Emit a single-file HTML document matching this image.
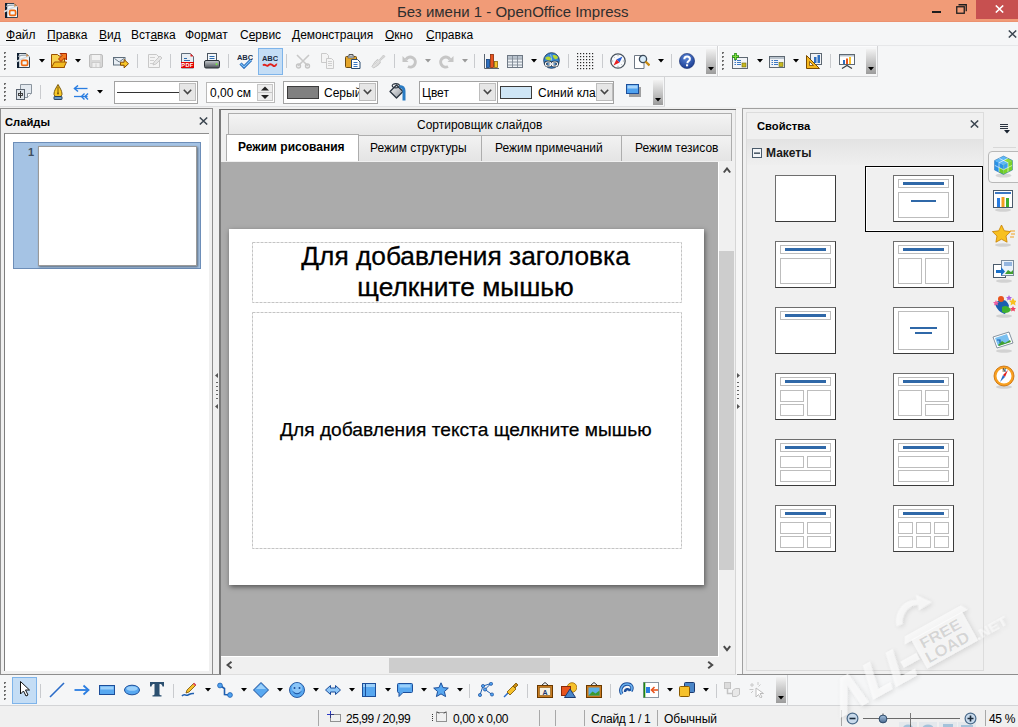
<!DOCTYPE html>
<html><head><meta charset="utf-8">
<style>
*{box-sizing:border-box}
html,body{margin:0;padding:0}
body{width:1018px;height:727px;position:relative;overflow:hidden;background:#F0F0F0;font-family:"Liberation Sans",sans-serif;color:#000}
.a{position:absolute;display:block}
.t{position:absolute;white-space:nowrap;line-height:1}
.u{text-decoration:underline;text-underline-offset:1px;text-decoration-thickness:1px}
</style></head><body>
<div class="a" style="left:0px;top:0px;width:1018px;height:22px;background:#F19B77"></div>
<div class="a" style="left:0px;top:21px;width:1018px;height:1px;background:#EC9270"></div>
<svg class="a" style="left:4px;top:2px;" width="16" height="16" viewBox="0 0 16 16"><path d="M1.5 1.5h8.5l3.5 3.5v10.5h-12z" fill="#F2F6F9" stroke="#3A4652"/>
<rect x="1" y="1" width="2.2" height="15" fill="#0E1E30"/>
<path d="M10 1.5l3.5 3.5h-3.5z" fill="#F08A20"/>
<path d="M0 9.8C4 8 8 5 13.5 4.5" stroke="#D6DDE3" stroke-width="1.6" fill="none"/>
<path d="M2 4.5C5 3 8 3 11 3.2" stroke="#9AA6B0" stroke-width="1.3" fill="none"/>
<rect x="5.6" y="8.3" width="6" height="5" rx="1.4" fill="#EEF8FC" stroke="#F26B10" stroke-width="1.7"/></svg>
<div class="t" style="left:397px;top:4.00px;font-size:15px;font-weight:400;color:#2E2E2E;">Без имени 1 - OpenOffice Impress</div>
<div class="a" style="left:976px;top:0px;width:42px;height:19px;background:#C75050"></div>
<div class="a" style="left:932px;top:11px;width:9px;height:2px;background:#1E1E1E"></div>
<svg class="a" style="left:956px;top:4px;" width="11" height="10" viewBox="0 0 11 10"><rect x="0.75" y="2.75" width="7.5" height="6.5" fill="none" stroke="#1E1E1E" stroke-width="1.3"/><path d="M2.5 0.75h7.75v6.5" fill="none" stroke="#1E1E1E" stroke-width="1.3"/></svg>
<svg class="a" style="left:995px;top:5px;" width="9" height="8" viewBox="0 0 9 8"><path d="M0.8 0.5l7.4 7M8.2 0.5l-7.4 7" stroke="#fff" stroke-width="1.6"/></svg>
<div class="a" style="left:0px;top:22px;width:1018px;height:23px;background:#F5F6F7"></div>
<div class="a" style="left:0px;top:45px;width:1018px;height:1px;background:#E6E7E9"></div>
<div class="t" style="left:6px;top:29.04px;font-size:12px;font-weight:400;color:#000;"><span class="u">Ф</span>айл</div>
<div class="t" style="left:47px;top:29.04px;font-size:12px;font-weight:400;color:#000;"><span class="u">П</span>равка</div>
<div class="t" style="left:99px;top:29.04px;font-size:12px;font-weight:400;color:#000;"><span class="u">В</span>ид</div>
<div class="t" style="left:131px;top:29.04px;font-size:12px;font-weight:400;color:#000;">Вст<span class="u">а</span>вка</div>
<div class="t" style="left:185px;top:29.04px;font-size:12px;font-weight:400;color:#000;">Фо<span class="u">р</span>мат</div>
<div class="t" style="left:240px;top:29.04px;font-size:12px;font-weight:400;color:#000;">С<span class="u">е</span>рвис</div>
<div class="t" style="left:292px;top:29.04px;font-size:12px;font-weight:400;color:#000;"><span class="u">Д</span>емонстрация</div>
<div class="t" style="left:385px;top:29.04px;font-size:12px;font-weight:400;color:#000;"><span class="u">О</span>кно</div>
<div class="t" style="left:426px;top:29.04px;font-size:12px;font-weight:400;color:#000;"><span class="u">С</span>правка</div>
<svg class="a" style="left:1008px;top:30px;" width="9" height="8" viewBox="0 0 9 8"><path d="M0.8 0.5l7.4 7M8.2 0.5l-7.4 7" stroke="#3C4650" stroke-width="1.5"/></svg>
<div class="a" style="left:0px;top:46px;width:1018px;height:61px;background:#F5F6F7"></div>
<div class="a" style="left:0px;top:46px;width:878px;height:1px;background:#FBFBFC"></div>
<div class="a" style="left:0px;top:76px;width:878px;height:1px;background:#D3D4D6"></div>
<div class="a" style="left:877px;top:46px;width:1px;height:30px;background:#D3D4D6"></div>
<div class="a" style="left:717px;top:46px;width:1px;height:30px;background:#D3D4D6"></div>
<div class="a" style="left:718px;top:46px;width:1px;height:30px;background:#FFFFFF"></div>
<svg class="a" style="left:4px;top:52px;" width="3" height="3" viewBox="0 0 3 3"><rect x="0" y="0" width="2" height="2" fill="#6B6B6B"/><rect x="1" y="1" width="1" height="1" fill="#C8C8C8"/></svg>
<svg class="a" style="left:4px;top:56px;" width="3" height="3" viewBox="0 0 3 3"><rect x="0" y="0" width="2" height="2" fill="#6B6B6B"/><rect x="1" y="1" width="1" height="1" fill="#C8C8C8"/></svg>
<svg class="a" style="left:4px;top:60px;" width="3" height="3" viewBox="0 0 3 3"><rect x="0" y="0" width="2" height="2" fill="#6B6B6B"/><rect x="1" y="1" width="1" height="1" fill="#C8C8C8"/></svg>
<svg class="a" style="left:4px;top:64px;" width="3" height="3" viewBox="0 0 3 3"><rect x="0" y="0" width="2" height="2" fill="#6B6B6B"/><rect x="1" y="1" width="1" height="1" fill="#C8C8C8"/></svg>
<svg class="a" style="left:4px;top:68px;" width="3" height="3" viewBox="0 0 3 3"><rect x="0" y="0" width="2" height="2" fill="#6B6B6B"/><rect x="1" y="1" width="1" height="1" fill="#C8C8C8"/></svg>
<svg class="a" style="left:16px;top:52px;" width="16" height="16" viewBox="0 0 16 16"><path d="M1.5 1.5h8.5l3.5 3.5v10.5h-12z" fill="#F2F6F9" stroke="#3A4652"/>
<rect x="1" y="1" width="2.2" height="15" fill="#0E1E30"/>
<path d="M10 1.5l3.5 3.5h-3.5z" fill="#F08A20"/>
<path d="M0 9.8C4 8 8 5 13.5 4.5" stroke="#D6DDE3" stroke-width="1.6" fill="none"/>
<path d="M2 4.5C5 3 8 3 11 3.2" stroke="#9AA6B0" stroke-width="1.3" fill="none"/>
<rect x="5.6" y="8.3" width="6" height="5" rx="1.4" fill="#EEF8FC" stroke="#F26B10" stroke-width="1.7"/></svg>
<svg class="a" style="left:39px;top:59px;" width="6" height="4" viewBox="0 0 6 4"><path d="M0 0h6l-3 3.5z" fill="#000"/></svg>
<svg class="a" style="left:51px;top:53px;" width="16" height="16" viewBox="0 0 16 16"><path d="M0.5 1.5h6l1.5 1.5h5.5v11.5h-13z" fill="#F7D250" stroke="#9A5000"/>
<path d="M0.5 14.5l3-5.5h12l-2.5 5.5z" fill="#F2BC22" stroke="#9A5000"/>
<path d="M9 0.5h6.5v6.5l-2-2l-3.5 3.5l-2.5-2.5l3.5-3.5z" fill="#F27A1E" stroke="#A82800" stroke-linejoin="round"/></svg>
<svg class="a" style="left:75px;top:59px;" width="6" height="4" viewBox="0 0 6 4"><path d="M0 0h6l-3 3.5z" fill="#000"/></svg>
<svg class="a" style="left:88px;top:53px;" width="16" height="16" viewBox="0 0 16 16"><rect x="1.5" y="1.5" width="13" height="13" rx="1.5" fill="#D8D8D8" stroke="#BDBDBD"/>
<rect x="4" y="2" width="8" height="5" fill="#F2F2F2"/>
<rect x="4" y="9.5" width="8" height="5" fill="#EFEFEF" stroke="#C8C8C8" stroke-width=".8"/>
<rect x="7.6" y="10.5" width=".8" height="4" fill="#C8C8C8"/></svg>
<svg class="a" style="left:113px;top:53px;" width="16" height="16" viewBox="0 0 16 16"><rect x="0.5" y="4.5" width="11.5" height="7.5" fill="#E8EEF4" stroke="#5F6E7C"/>
<path d="M1.5 5.5l4.7 3.5l4.7-3.5" stroke="#5F6E7C" fill="none" stroke-width=".9"/>
<path d="M7.5 9.2h3.6v-2.7l4.4 4.2l-4.4 4.2v-2.7h-3.6z" fill="#F8C828" stroke="#8A4A00" stroke-width="1" stroke-linejoin="round"/></svg>
<div class="a" style="left:137px;top:54px;width:1px;height:14px;background:#C9CBCE"></div>
<svg class="a" style="left:146px;top:53px;" width="16" height="16" viewBox="0 0 16 16"><path d="M2.5 1.5h8l3 3v10h-11z" fill="#F4F4F4" stroke="#C8C8C8"/>
<path d="M4 4.5h5M4 7.5h4M4 10.5h3" stroke="#D0D0D0"/>
<path d="M7 12l1-3l6-6l2 2l-6 6z" fill="#E6E6E6" stroke="#C0C0C0" stroke-width=".8"/></svg>
<div class="a" style="left:170px;top:54px;width:1px;height:14px;background:#C9CBCE"></div>
<svg class="a" style="left:180px;top:53px;" width="16" height="16" viewBox="0 0 16 16"><path d="M1.5 0.5h9l3 3v11.5h-12z" fill="#E8EEF3" stroke="#5E6C7A"/>
<path d="M10.5 0.5l3 3h-3z" fill="#E52020"/>
<path d="M4 5.5h3M4 7.5h6" stroke="#2D6CB0" stroke-width="1"/>
<rect x="1" y="9" width="13" height="6" fill="#E00000"/>
<text x="7.5" y="14.3" font-family="Liberation Sans" font-weight="bold" font-size="5.6" fill="#fff" text-anchor="middle" letter-spacing=".4">PDF</text></svg>
<svg class="a" style="left:204px;top:53px;" width="16" height="16" viewBox="0 0 16 16"><defs><linearGradient id="pg" x1="0" y1="0" x2="0" y2="1"><stop offset="0" stop-color="#C8CCD0"/><stop offset="1" stop-color="#4A5056"/></linearGradient></defs>
<rect x="3.5" y="0.5" width="9" height="8" fill="#F4F8FB" stroke="#4A5560"/>
<path d="M5.5 3.5h5M5.5 5.5h5" stroke="#2D6CB0"/>
<rect x="0.5" y="7.5" width="15" height="7.5" rx="1.5" fill="url(#pg)" stroke="#2A3036"/>
<circle cx="12.5" cy="11.3" r="1" fill="#6BEA3A"/></svg>
<div class="a" style="left:228px;top:54px;width:1px;height:14px;background:#C9CBCE"></div>
<svg class="a" style="left:237px;top:53px;" width="16" height="16" viewBox="0 0 16 16"><text x="8" y="7" font-family="Liberation Sans" font-weight="bold" font-size="7.5" fill="#1C2C44" text-anchor="middle">ABC</text>
<path d="M3.5 10.5l3.5 3.5l7-7" stroke="#1A5FB4" stroke-width="3" fill="none"/>
<path d="M3.5 10.5l3.5 3.5l7-7" stroke="#7EC3F7" stroke-width="1.2" fill="none"/></svg>
<div class="a" style="left:258px;top:48px;width:25px;height:27px;background:#C4DDF5;border:1px solid #7EB4EA"></div>
<svg class="a" style="left:262px;top:53px;" width="16" height="16" viewBox="0 0 16 16"><text x="8" y="8" font-family="Liberation Sans" font-weight="bold" font-size="7.5" fill="#1C2C44" text-anchor="middle">ABC</text>
<path d="M1 12.5c2-2.5 3.5 1.5 5 0s3-2 5 0s3-1.5 4-1" stroke="#E0201B" stroke-width="1.8" fill="none"/></svg>
<div class="a" style="left:286px;top:54px;width:1px;height:14px;background:#C9CBCE"></div>
<svg class="a" style="left:295px;top:53px;" width="16" height="16" viewBox="0 0 16 16"><path d="M2 2l11 11M14 2l-11 11" stroke="#C8C8C8" stroke-width="1.6"/>
<circle cx="3.5" cy="13" r="2" fill="none" stroke="#C4C4C4" stroke-width="1.4"/>
<circle cx="12.5" cy="13" r="2" fill="none" stroke="#C4C4C4" stroke-width="1.4"/></svg>
<svg class="a" style="left:320px;top:53px;" width="16" height="16" viewBox="0 0 16 16"><path d="M1.5 0.5h5l2 2v7h-7z" fill="#F4F4F4" stroke="#CACACA"/>
<path d="M6.5 5.5h5l2 2v8h-7z" fill="#F4F4F4" stroke="#CACACA"/>
<path d="M8 8.5h4M8 10.5h4M8 12.5h4" stroke="#D0D0D0"/></svg>
<svg class="a" style="left:345px;top:53px;" width="16" height="16" viewBox="0 0 16 16"><rect x="0.5" y="3.5" width="11" height="11" rx="1" fill="#E4A52A" stroke="#6C4A10"/>
<path d="M4 3.5v-2h4v2" fill="#fff" stroke="#555"/>
<rect x="3" y="3" width="6" height="2" fill="#B8C0C8" stroke="#555" stroke-width=".6"/>
<path d="M6.5 6.5h6l2.5 2.5v6.5h-8.5z" fill="#fff" stroke="#2B4A70"/>
<path d="M8.5 9.5h4M8.5 11.5h4M8.5 13.5h4" stroke="#3C78C3"/></svg>
<svg class="a" style="left:370px;top:53px;" width="16" height="16" viewBox="0 0 16 16"><path d="M9.5 6.5l4-4.5l1.5 1.5l-4.5 4z" fill="#D8D8D8" stroke="#C4C4C4" stroke-width=".8"/>
<path d="M2 13.5c2-3 3-6 6-7l2.5 2.5c-1 3-4 4-7 6z" fill="#E2E2E2" stroke="#C0C0C0" stroke-width=".9"/>
<path d="M4.5 11.5l3-3M6 12.5l3-3" stroke="#CCCCCC" stroke-width=".8"/></svg>
<div class="a" style="left:394px;top:54px;width:1px;height:14px;background:#C9CBCE"></div>
<svg class="a" style="left:402px;top:53px;" width="16" height="16" viewBox="0 0 16 16"><path d="M4 6.5a5 5 0 1 1 2 7" stroke="#C6C6C6" stroke-width="3" fill="none"/>
<path d="M0.5 3v6h6z" fill="#C6C6C6"/></svg>
<svg class="a" style="left:425px;top:59px;" width="6" height="4" viewBox="0 0 6 4"><path d="M0 0h6l-3 3.5z" fill="#9A9A9A"/></svg>
<svg class="a" style="left:438px;top:53px;" width="16" height="16" viewBox="0 0 16 16"><path d="M12 6.5a5 5 0 1 0 -2 7" stroke="#C6C6C6" stroke-width="3" fill="none"/>
<path d="M15.5 3v6h-6z" fill="#C6C6C6"/></svg>
<svg class="a" style="left:462px;top:59px;" width="6" height="4" viewBox="0 0 6 4"><path d="M0 0h6l-3 3.5z" fill="#9A9A9A"/></svg>
<div class="a" style="left:474px;top:54px;width:1px;height:14px;background:#C9CBCE"></div>
<svg class="a" style="left:483px;top:53px;" width="16" height="16" viewBox="0 0 16 16"><path d="M1.5 1v14.5h15" stroke="#5A6470" fill="none"/>
<rect x="3.5" y="6.5" width="3" height="8" fill="#2E6FC0" stroke="#123E78" stroke-width=".8"/>
<rect x="7.5" y="1.5" width="3" height="13" fill="#E8541E" stroke="#8A2A08" stroke-width=".8"/>
<rect x="11.5" y="8.5" width="3" height="6" fill="#F6C12B" stroke="#8A6A08" stroke-width=".8"/></svg>
<svg class="a" style="left:507px;top:53px;" width="16" height="16" viewBox="0 0 16 16"><rect x="0.5" y="2.5" width="15" height="12" fill="#EEF2F6" stroke="#6E7884"/>
<rect x="1" y="3" width="14" height="2.5" fill="#B9C3CD"/>
<path d="M1 6h14M1 9h14M1 12h14M5.5 3v11M10.5 3v11" stroke="#7E8894" stroke-width=".9"/></svg>
<svg class="a" style="left:531px;top:59px;" width="6" height="4" viewBox="0 0 6 4"><path d="M0 0h6l-3 3.5z" fill="#000"/></svg>
<svg class="a" style="left:543px;top:52px;" width="17" height="17" viewBox="0 0 17 17"><circle cx="8.5" cy="8.5" r="7.8" fill="#3A86D0" stroke="#1A3A60" stroke-width=".9"/>
<path d="M2.5 5.5c1.5-1 3-1.5 4.5-.5s1 2.5 .5 3.5c-1.5 0-3-.5-5-1.5z M9.5 3.5c2-1 4-.5 5.5 2c-.5 1.5-2 2-3 1.5s-2-2-2.5-3.5z" fill="#B8D830"/>
<path d="M7.5 2.5c.5 2 1.5 4 1 6" stroke="#8CC8F0" stroke-width="1" fill="none"/>
<rect x="2.5" y="10" width="5.5" height="4" rx="2" fill="none" stroke="#1A2A3A" stroke-width="2.4"/>
<rect x="9" y="10" width="5.5" height="4" rx="2" fill="none" stroke="#1A2A3A" stroke-width="2.4"/>
<rect x="2.5" y="10" width="5.5" height="4" rx="2" fill="none" stroke="#fff" stroke-width="1.1"/>
<rect x="9" y="10" width="5.5" height="4" rx="2" fill="none" stroke="#fff" stroke-width="1.1"/>
<path d="M5.5 12h6" stroke="#fff" stroke-width="1.2"/></svg>
<div class="a" style="left:568px;top:54px;width:1px;height:14px;background:#C9CBCE"></div>
<svg class="a" style="left:576px;top:52px;" width="18" height="18" viewBox="0 0 18 18"><g fill="#2A2A2A"><rect x="1" y="1" width="1.2" height="1.2"/><rect x="1" y="4" width="1.2" height="1.2"/><rect x="1" y="7" width="1.2" height="1.2"/><rect x="1" y="10" width="1.2" height="1.2"/><rect x="1" y="13" width="1.2" height="1.2"/><rect x="1" y="16" width="1.2" height="1.2"/><rect x="4" y="1" width="1.2" height="1.2"/><rect x="4" y="4" width="1.2" height="1.2"/><rect x="4" y="7" width="1.2" height="1.2"/><rect x="4" y="10" width="1.2" height="1.2"/><rect x="4" y="13" width="1.2" height="1.2"/><rect x="4" y="16" width="1.2" height="1.2"/><rect x="7" y="1" width="1.2" height="1.2"/><rect x="7" y="4" width="1.2" height="1.2"/><rect x="7" y="7" width="1.2" height="1.2"/><rect x="7" y="10" width="1.2" height="1.2"/><rect x="7" y="13" width="1.2" height="1.2"/><rect x="7" y="16" width="1.2" height="1.2"/><rect x="10" y="1" width="1.2" height="1.2"/><rect x="10" y="4" width="1.2" height="1.2"/><rect x="10" y="7" width="1.2" height="1.2"/><rect x="10" y="10" width="1.2" height="1.2"/><rect x="10" y="13" width="1.2" height="1.2"/><rect x="10" y="16" width="1.2" height="1.2"/><rect x="13" y="1" width="1.2" height="1.2"/><rect x="13" y="4" width="1.2" height="1.2"/><rect x="13" y="7" width="1.2" height="1.2"/><rect x="13" y="10" width="1.2" height="1.2"/><rect x="13" y="13" width="1.2" height="1.2"/><rect x="13" y="16" width="1.2" height="1.2"/><rect x="16" y="1" width="1.2" height="1.2"/><rect x="16" y="4" width="1.2" height="1.2"/><rect x="16" y="7" width="1.2" height="1.2"/><rect x="16" y="10" width="1.2" height="1.2"/><rect x="16" y="13" width="1.2" height="1.2"/><rect x="16" y="16" width="1.2" height="1.2"/></g></svg>
<div class="a" style="left:602px;top:54px;width:1px;height:14px;background:#C9CBCE"></div>
<svg class="a" style="left:610px;top:53px;" width="16" height="16" viewBox="0 0 16 16"><circle cx="8" cy="8" r="7.2" fill="#F8FAFC" stroke="#4A545E" stroke-width="1.3"/>
<path d="M8 1.8v1.4M8 12.8v1.4M1.8 8h1.4M12.8 8h1.4M3.6 3.6l1 1M11.4 11.4l1 1M12.4 3.6l-1 1M3.6 12.4l1-1" stroke="#8A949E" stroke-width=".8"/>
<path d="M12.5 3.5L9.6 9.6L6.4 6.4z" fill="#2A5CD0"/>
<path d="M3.5 12.5L6.4 6.4L9.6 9.6z" fill="#E82020"/></svg>
<svg class="a" style="left:634px;top:53px;" width="16" height="16" viewBox="0 0 16 16"><path d="M0.5 2.5h7l2.5 2.5v10.5h-9.5z" fill="#fff" stroke="#6E7884"/>
<circle cx="9" cy="6" r="3.6" fill="#D8ECFA" stroke="#3A4A5A" stroke-width="1.3"/>
<path d="M11.5 8.5l4 4" stroke="#C88A10" stroke-width="2.4"/></svg>
<svg class="a" style="left:658px;top:59px;" width="6" height="4" viewBox="0 0 6 4"><path d="M0 0h6l-3 3.5z" fill="#000"/></svg>
<div class="a" style="left:671px;top:54px;width:1px;height:14px;background:#C9CBCE"></div>
<svg class="a" style="left:679px;top:53px;" width="16" height="16" viewBox="0 0 16 16"><defs><radialGradient id="hg" cx=".45" cy=".3" r=".7"><stop offset="0" stop-color="#5A86D8"/><stop offset="1" stop-color="#1A3C90"/></radialGradient></defs>
<circle cx="8" cy="8" r="7.6" fill="url(#hg)" stroke="#1A3070" stroke-width=".6"/>
<path d="M5.3 6.2c0-1.8 1.2-2.8 2.8-2.8s2.8 1 2.8 2.5c0 1.4-.9 1.9-1.6 2.4c-.6.4-.8.7-.8 1.5v.4" stroke="#fff" stroke-width="2" fill="none"/>
<rect x="7" y="11.3" width="2.1" height="2" fill="#fff"/></svg>
<div class="a" style="left:706px;top:49px;width:10px;height:25px;background:linear-gradient(#F2F2F2,#9C9C9C)"></div>
<svg class="a" style="left:708px;top:67px;" width="6" height="4" viewBox="0 0 6 4"><path d="M0 0h6l-3 3.5z" fill="#000"/></svg>
<svg class="a" style="left:722px;top:52px;" width="3" height="3" viewBox="0 0 3 3"><rect x="0" y="0" width="2" height="2" fill="#6B6B6B"/><rect x="1" y="1" width="1" height="1" fill="#C8C8C8"/></svg>
<svg class="a" style="left:722px;top:56px;" width="3" height="3" viewBox="0 0 3 3"><rect x="0" y="0" width="2" height="2" fill="#6B6B6B"/><rect x="1" y="1" width="1" height="1" fill="#C8C8C8"/></svg>
<svg class="a" style="left:722px;top:60px;" width="3" height="3" viewBox="0 0 3 3"><rect x="0" y="0" width="2" height="2" fill="#6B6B6B"/><rect x="1" y="1" width="1" height="1" fill="#C8C8C8"/></svg>
<svg class="a" style="left:722px;top:64px;" width="3" height="3" viewBox="0 0 3 3"><rect x="0" y="0" width="2" height="2" fill="#6B6B6B"/><rect x="1" y="1" width="1" height="1" fill="#C8C8C8"/></svg>
<svg class="a" style="left:722px;top:68px;" width="3" height="3" viewBox="0 0 3 3"><rect x="0" y="0" width="2" height="2" fill="#6B6B6B"/><rect x="1" y="1" width="1" height="1" fill="#C8C8C8"/></svg>
<svg class="a" style="left:732px;top:53px;" width="16" height="16" viewBox="0 0 16 16"><rect x="0.5" y="4.5" width="15" height="11" fill="#F2F4F7" stroke="#5E6872"/>
<path d="M2.5 7.5h1.5M5 7.5h4M2.5 9.5h1.5M5 9.5h4M2.5 11.5h1.5M5 11.5h4" stroke="#3C78C3"/>
<rect x="10" y="10" width="4" height="4" fill="#C8B820" stroke="#6A6A10" stroke-width=".6"/>
<path d="M3.5 0v7M0 3.5h7" stroke="#1F8A10" stroke-width="2.6"/>
<path d="M3.5 0.8v5.4M0.8 3.5h5.4" stroke="#7EDB3A" stroke-width="1.2"/></svg>
<svg class="a" style="left:757px;top:59px;" width="6" height="4" viewBox="0 0 6 4"><path d="M0 0h6l-3 3.5z" fill="#000"/></svg>
<svg class="a" style="left:769px;top:53px;" width="16" height="16" viewBox="0 0 16 16"><rect x="0.5" y="3.5" width="15" height="11" fill="#F2F4F7" stroke="#5E6872"/>
<rect x="1" y="4" width="14" height="2" fill="#B9C3CD"/>
<path d="M2.5 7.5h1.5M5 7.5h4M2.5 9.5h1.5M5 9.5h4M2.5 11.5h1.5M5 11.5h4" stroke="#3C78C3"/>
<rect x="10" y="9.5" width="4" height="4" fill="#C8B820" stroke="#6A6A10" stroke-width=".6"/></svg>
<svg class="a" style="left:793px;top:59px;" width="6" height="4" viewBox="0 0 6 4"><path d="M0 0h6l-3 3.5z" fill="#000"/></svg>
<svg class="a" style="left:806px;top:53px;" width="16" height="16" viewBox="0 0 16 16"><rect x="4.5" y="0.5" width="11" height="11" fill="#F2F4F7" stroke="#5E6872"/>
<rect x="8" y="4" width="2.5" height="6" fill="#2E6FC0"/><rect x="11.5" y="2" width="2.5" height="8" fill="#2E6FC0"/>
<path d="M0.5 2.5v13h13z" fill="#F6B81E" stroke="#7A4A00"/>
<path d="M3.5 8.5v4h4z" fill="#F2F4F7" stroke="#7A4A00" stroke-width=".8"/></svg>
<div class="a" style="left:830px;top:54px;width:1px;height:14px;background:#C9CBCE"></div>
<svg class="a" style="left:839px;top:53px;" width="16" height="16" viewBox="0 0 16 16"><rect x="0.5" y="1.5" width="15" height="10" fill="#fff" stroke="#5E6872"/>
<rect x="1" y="2" width="14" height="1.5" fill="#B9C3CD"/>
<rect x="4" y="7" width="2" height="4" fill="#2E6FC0"/><rect x="7" y="5.5" width="2" height="5.5" fill="#E8541E"/><rect x="10" y="4" width="2" height="7" fill="#F6C12B"/>
<path d="M8 12v1M3 15.5l5-3l5 3" stroke="#3A4046" stroke-width="1.2" fill="none"/></svg>
<div class="a" style="left:866px;top:49px;width:10px;height:25px;background:linear-gradient(#F2F2F2,#9C9C9C)"></div>
<svg class="a" style="left:868px;top:67px;" width="6" height="4" viewBox="0 0 6 4"><path d="M0 0h6l-3 3.5z" fill="#000"/></svg>
<div class="a" style="left:664px;top:77px;width:1px;height:30px;background:#D3D4D6"></div>
<div class="a" style="left:0px;top:106px;width:665px;height:1px;background:#DDDEE0"></div>
<svg class="a" style="left:4px;top:83px;" width="3" height="3" viewBox="0 0 3 3"><rect x="0" y="0" width="2" height="2" fill="#6B6B6B"/><rect x="1" y="1" width="1" height="1" fill="#C8C8C8"/></svg>
<svg class="a" style="left:4px;top:87px;" width="3" height="3" viewBox="0 0 3 3"><rect x="0" y="0" width="2" height="2" fill="#6B6B6B"/><rect x="1" y="1" width="1" height="1" fill="#C8C8C8"/></svg>
<svg class="a" style="left:4px;top:91px;" width="3" height="3" viewBox="0 0 3 3"><rect x="0" y="0" width="2" height="2" fill="#6B6B6B"/><rect x="1" y="1" width="1" height="1" fill="#C8C8C8"/></svg>
<svg class="a" style="left:4px;top:95px;" width="3" height="3" viewBox="0 0 3 3"><rect x="0" y="0" width="2" height="2" fill="#6B6B6B"/><rect x="1" y="1" width="1" height="1" fill="#C8C8C8"/></svg>
<svg class="a" style="left:4px;top:99px;" width="3" height="3" viewBox="0 0 3 3"><rect x="0" y="0" width="2" height="2" fill="#6B6B6B"/><rect x="1" y="1" width="1" height="1" fill="#C8C8C8"/></svg>
<svg class="a" style="left:16px;top:84px;" width="16" height="16" viewBox="0 0 16 16"><path d="M4.5 0.5h11v9l-4 4h-7z" fill="#E4EAF0" stroke="#8A949E"/>
<path d="M15.5 9.5h-4v4" fill="#fff" stroke="#8A949E"/>
<rect x="0.5" y="5.5" width="8" height="10" fill="#DCE2E8" stroke="#5A6470"/>
<path d="M4.5 7v7" stroke="#333"/><rect x="2.5" y="9.5" width="4" height="2" fill="none" stroke="#333" stroke-width=".9"/></svg>
<div class="a" style="left:40px;top:85px;width:1px;height:14px;background:#C9CBCE"></div>
<svg class="a" style="left:53px;top:84px;" width="10" height="16" viewBox="0 0 10 16"><path d="M5 0.5c-1 1.5-1.5 2.5-2 3.5c-1.5 2.5-2 4.5-2 6.5l1.2 2h5.6l1.2-2c0-2-.5-4-2-6.5c-.5-1-1-2-2-3.5z" fill="#F8C828" stroke="#6A4A00" stroke-width=".9"/>
<path d="M5 2.5v6.5" stroke="#6A4A00" stroke-width=".9"/><circle cx="5" cy="9.5" r=".9" fill="#6A4A00"/>
<rect x="1" y="12.5" width="8" height="3" rx=".5" fill="#6A9AC8" stroke="#1C3858" stroke-width=".9"/></svg>
<svg class="a" style="left:73px;top:85px;" width="16" height="16" viewBox="0 0 16 16"><path d="M1.5 3.5h13" stroke="#2A7DE1" stroke-width="1.3"/><path d="M5 0.5l-3.5 3l3.5 3" stroke="#2A7DE1" stroke-width="1.5" fill="none"/>
<path d="M1 11.5h13.5" stroke="#2A7DE1" stroke-width="1.3"/><path d="M11.5 8.5l-3 3l3 3M15 8.5l-3 3l3 3" stroke="#2A7DE1" stroke-width="1.4" fill="none"/></svg>
<svg class="a" style="left:97px;top:90px;" width="6" height="4" viewBox="0 0 6 4"><path d="M0 0h6l-3 3.5z" fill="#000"/></svg>
<div class="a" style="left:114px;top:81px;width:84px;height:23px;background:#fff;border:1px solid #A3A3A3"></div>
<div class="a" style="left:117px;top:92px;width:63px;height:1px;background:#333"></div>
<div class="a" style="left:179px;top:83px;width:17px;height:18px;background:#E6E6E6;border:1px solid #BDBDBD"></div>
<svg class="a" style="left:183px;top:89px;" width="9" height="6" viewBox="0 0 9 6"><path d="M0.8 0.8l3.7 3.7l3.7-3.7" stroke="#444" stroke-width="1.6" fill="none"/></svg>
<div class="a" style="left:206px;top:82px;width:69px;height:21px;background:#fff;border:1px solid #B9B9B9"></div>
<div class="t" style="left:210px;top:87.34px;font-size:12px;font-weight:400;color:#000;">0,00 см</div>
<div class="a" style="left:257px;top:84px;width:16px;height:17px;background:#EDEDED;border:1px solid #C6C6C6"></div>
<div class="a" style="left:258px;top:92px;width:14px;height:1px;background:#C6C6C6"></div>
<svg class="a" style="left:261px;top:86px;" width="8" height="14" viewBox="0 0 8 14"><path d="M0 4.5l4-4l4 4z M0 9l4 4l4-4z" fill="#222"/></svg>
<div class="a" style="left:283px;top:81px;width:95px;height:23px;background:#fff;border:1px solid #A3A3A3"></div>
<div class="a" style="left:287px;top:86px;width:32px;height:13px;background:#808080;border:1px solid #3C3C3C"></div>
<div class="t" style="left:324px;top:87.34px;font-size:12px;font-weight:400;color:#000;">Серый</div>
<div class="a" style="left:359px;top:83px;width:17px;height:18px;background:#E6E6E6;border:1px solid #BDBDBD"></div>
<svg class="a" style="left:363px;top:89px;" width="9" height="6" viewBox="0 0 9 6"><path d="M0.8 0.8l3.7 3.7l3.7-3.7" stroke="#444" stroke-width="1.6" fill="none"/></svg>
<svg class="a" style="left:389px;top:82px;" width="17" height="20" viewBox="0 0 17 20"><defs><linearGradient id="bk" x1="0" y1="0" x2="1" y2="1"><stop offset="0" stop-color="#fff"/><stop offset="1" stop-color="#8A9098"/></linearGradient></defs>
<path d="M1 9.5L7.5 3L14 9.5L7.5 16z" fill="url(#bk)" stroke="#2A3440" stroke-width="1.3" stroke-linejoin="round"/>
<ellipse cx="6.8" cy="3.8" rx="3.6" ry="2.1" fill="none" stroke="#2A3440" stroke-width="1.2"/>
<path d="M10.5 4.5c3 0 4.5 1.5 4.5 4.5v9.5" stroke="#2B7CC4" stroke-width="3" fill="none"/></svg>
<div class="a" style="left:419px;top:81px;width:79px;height:23px;background:#fff;border:1px solid #A3A3A3"></div>
<div class="t" style="left:422px;top:87.34px;font-size:12px;font-weight:400;color:#000;">Цвет</div>
<div class="a" style="left:479px;top:83px;width:17px;height:18px;background:#E6E6E6;border:1px solid #BDBDBD"></div>
<svg class="a" style="left:483px;top:89px;" width="9" height="6" viewBox="0 0 9 6"><path d="M0.8 0.8l3.7 3.7l3.7-3.7" stroke="#444" stroke-width="1.6" fill="none"/></svg>
<div class="a" style="left:497px;top:81px;width:117px;height:23px;background:#fff;border:1px solid #A3A3A3"></div>
<div class="a" style="left:500px;top:86px;width:32px;height:13px;background:#CFE6F6;border:1px solid #3C3C3C"></div>
<div class="t" style="left:538px;top:87.34px;font-size:12px;font-weight:400;color:#000;">Синий кла</div>
<div class="a" style="left:596px;top:83px;width:17px;height:18px;background:#E6E6E6;border:1px solid #BDBDBD"></div>
<svg class="a" style="left:600px;top:89px;" width="9" height="6" viewBox="0 0 9 6"><path d="M0.8 0.8l3.7 3.7l3.7-3.7" stroke="#444" stroke-width="1.6" fill="none"/></svg>
<svg class="a" style="left:626px;top:83px;" width="16" height="16" viewBox="0 0 16 16"><rect x="3" y="4" width="12" height="10" fill="#8A8A8A" opacity=".8"/>
<rect x="0.5" y="1.5" width="12" height="9" fill="#4FA2F0" stroke="#1D4F9A"/>
<rect x="1.5" y="2.5" width="10" height="3" fill="#A8D4FA"/></svg>
<div class="a" style="left:653px;top:80px;width:10px;height:25px;background:linear-gradient(#F2F2F2,#9C9C9C)"></div>
<svg class="a" style="left:655px;top:98px;" width="6" height="4" viewBox="0 0 6 4"><path d="M0 0h6l-3 3.5z" fill="#000"/></svg>
<div class="a" style="left:0px;top:108px;width:213px;height:567px;background:#F0F0F0;border:1px solid #8E8E8E"></div>
<div class="t" style="left:5px;top:116.52px;font-size:11.2px;font-weight:700;color:#000;">Слайды</div>
<svg class="a" style="left:199px;top:117px;" width="9" height="8" viewBox="0 0 9 8"><path d="M0.8 0.5l7.4 7M8.2 0.5l-7.4 7" stroke="#3C4650" stroke-width="1.5"/></svg>
<div class="a" style="left:4px;top:133px;width:205px;height:538px;background:#fff;border-top:1px solid #8E8E8E;border-left:1px solid #7E7E7E"></div>
<div class="a" style="left:13px;top:142px;width:188px;height:127px;background:#A5C3E4;border:1px solid #6D8EB8"></div>
<div class="t" style="left:28px;top:146.69px;font-size:11px;font-weight:700;color:#3F4F60;">1</div>
<div class="a" style="left:38px;top:146px;width:159px;height:120px;background:#fff;border:1px solid #9A9A9A;box-shadow:1px 1px 2px rgba(0,0,0,.45)"></div>
<svg class="a" style="left:214px;top:373px;" width="5" height="36" viewBox="0 0 5 36"><path d="M4 0l-3 2.5l3 2.5z" fill="#555"/><g fill="#666"><rect x="2" y="9" width="2" height="1"/><rect x="2" y="13" width="2" height="1"/><rect x="2" y="17" width="2" height="1"/><rect x="2" y="21" width="2" height="1"/><rect x="2" y="25" width="2" height="1"/></g><path d="M4 31l-3 2.5l3 2.5z" fill="#555"/></svg>
<div class="a" style="left:219px;top:109px;width:517px;height:566px;background:#F0F0F0;border-left:2px solid #7A7A7A;border-top:1px solid #6E6E6E"></div>
<div class="a" style="left:228px;top:113px;width:504px;height:22px;background:linear-gradient(#F4F4F4,#E6E6E6);border:1px solid #ADADAD;border-bottom:none"></div>
<div class="t" style="left:417px;top:118.74px;font-size:12px;font-weight:400;color:#000;">Сортировщик слайдов</div>
<div class="a" style="left:226px;top:134px;width:133px;height:27px;background:#fff;border:1px solid #ADADAD;border-bottom:none"></div>
<div class="t" style="left:238px;top:140.84px;font-size:12px;font-weight:700;color:#000;">Режим рисования</div>
<div class="a" style="left:359px;top:135px;width:123px;height:26px;background:linear-gradient(#F2F2F2,#E4E4E4);border-top:1px solid #ADADAD;border-right:1px solid #ADADAD"></div>
<div class="t" style="left:370px;top:142.04px;font-size:12px;font-weight:400;color:#000;">Режим структуры</div>
<div class="a" style="left:482px;top:135px;width:140px;height:26px;background:linear-gradient(#F2F2F2,#E4E4E4);border-top:1px solid #ADADAD;border-right:1px solid #ADADAD"></div>
<div class="t" style="left:495px;top:142.04px;font-size:12px;font-weight:400;color:#000;">Режим примечаний</div>
<div class="a" style="left:622px;top:135px;width:110px;height:26px;background:linear-gradient(#F2F2F2,#E4E4E4);border-top:1px solid #ADADAD;border-right:1px solid #ADADAD"></div>
<div class="t" style="left:635px;top:142.04px;font-size:12px;font-weight:400;color:#000;">Режим тезисов</div>
<div class="a" style="left:221px;top:162px;width:497px;height:495px;background:#ABABAB"></div>
<div class="a" style="left:229px;top:229px;width:475px;height:356px;background:#fff;box-shadow:1px 2px 5px rgba(0,0,0,.5)"></div>
<svg class="a" style="left:252px;top:242px;" width="430" height="61" viewBox="0 0 430 61"><rect x="0.5" y="0.5" width="429" height="60" fill="none" stroke="#C4C4C4" stroke-dasharray="3 1"/></svg>
<svg class="a" style="left:252px;top:312px;" width="430" height="237" viewBox="0 0 430 237"><rect x="0.5" y="0.5" width="429" height="236" fill="none" stroke="#C4C4C4" stroke-dasharray="3 1"/></svg>
<div class="t" style="left:251px;top:241.2px;width:429px;text-align:center;font-size:26.3px;line-height:30.5px;color:#000;-webkit-text-stroke:0.3px #000">Для добавления заголовка<br>щелкните мышью</div>
<div class="t" style="left:280px;top:419.95px;font-size:19.2px;font-weight:400;color:#000;-webkit-text-stroke:0.25px #000">Для добавления текста щелкните мышью</div>
<div class="a" style="left:718px;top:162px;width:1px;height:495px;background:#fff"></div>
<div class="a" style="left:719px;top:162px;width:16px;height:512px;background:#F0F0F0"></div>
<div class="a" style="left:719px;top:251px;width:15px;height:319px;background:#CDCDCD"></div>
<svg class="a" style="left:723px;top:167px;" width="8" height="7" viewBox="0 0 8 7"><path d="M0.8 5.5l3.2-4l3.2 4" stroke="#4A4A4A" stroke-width="2" fill="none"/></svg>
<svg class="a" style="left:723px;top:645px;" width="8" height="7" viewBox="0 0 8 7"><path d="M0.8 1.2l3.2 4l3.2-4" stroke="#4A4A4A" stroke-width="2" fill="none"/></svg>
<div class="a" style="left:221px;top:656px;width:497px;height:1px;background:#fff"></div>
<div class="a" style="left:221px;top:657px;width:514px;height:17px;background:#F0F0F0"></div>
<div class="a" style="left:389px;top:658px;width:161px;height:15px;background:#CDCDCD"></div>
<svg class="a" style="left:226px;top:661px;" width="7" height="8" viewBox="0 0 7 8"><path d="M5.5 0.8l-4 3.2l4 3.2" stroke="#4A4A4A" stroke-width="2" fill="none"/></svg>
<svg class="a" style="left:707px;top:661px;" width="7" height="8" viewBox="0 0 7 8"><path d="M1.2 0.8l4 3.2l-4 3.2" stroke="#4A4A4A" stroke-width="2" fill="none"/></svg>
<div class="a" style="left:735px;top:110px;width:1px;height:564px;background:#D6D6D6"></div>
<div class="a" style="left:736px;top:108px;width:6px;height:566px;background:#F6F6F6"></div>
<svg class="a" style="left:736px;top:373px;" width="5" height="36" viewBox="0 0 5 36"><path d="M1 0l3 2.5l-3 2.5z" fill="#555"/><g fill="#666"><rect x="1" y="9" width="2" height="1"/><rect x="1" y="13" width="2" height="1"/><rect x="1" y="17" width="2" height="1"/><rect x="1" y="21" width="2" height="1"/><rect x="1" y="25" width="2" height="1"/></g><path d="M1 31l3 2.5l-3 2.5z" fill="#555"/></svg>
<div class="a" style="left:742px;top:108px;width:276px;height:566px;background:#F0F0F0;border-left:1px solid #A0A0A0;border-top:1px solid #A0A0A0"></div>
<div class="a" style="left:746px;top:112px;width:238px;height:559px;background:#F0F0F0;border:1px solid #DCDCDC"></div>
<div class="t" style="left:757px;top:121.32px;font-size:11.2px;font-weight:700;color:#000;">Свойства</div>
<svg class="a" style="left:970px;top:120px;" width="9" height="8" viewBox="0 0 9 8"><path d="M0.8 0.5l7.4 7M8.2 0.5l-7.4 7" stroke="#3C4650" stroke-width="1.5"/></svg>
<div class="a" style="left:747px;top:139px;width:236px;height:26px;background:linear-gradient(#E3E3E3,#EFEFEF)"></div>
<svg class="a" style="left:752px;top:148px;" width="10" height="10" viewBox="0 0 10 10"><rect x="0.5" y="0.5" width="9" height="9" fill="#F4F6F8" stroke="#4A5A6A"/><rect x="2" y="4.5" width="6" height="1.3" fill="#2A3A4A"/></svg>
<div class="t" style="left:766px;top:147.44px;font-size:12px;font-weight:700;color:#1A1A1A;">Макеты</div>
<div class="a" style="left:865px;top:166px;width:118px;height:66px;border:1px solid #000;box-shadow:inset 0 0 0 1px #fff"></div>
<div class="a" style="left:775px;top:175px;width:61px;height:47px;background:#fff;border:1px solid #6E6E6E;border-right-color:#3A3A3A;border-bottom-color:#3A3A3A"></div>
<svg class="a" style="left:775px;top:175px" width="61" height="47" viewBox="0 0 61 47"></svg>
<div class="a" style="left:893px;top:175px;width:61px;height:47px;background:#fff;border:1px solid #6E6E6E;border-right-color:#3A3A3A;border-bottom-color:#3A3A3A"></div>
<svg class="a" style="left:893px;top:175px" width="61" height="47" viewBox="0 0 61 47"><rect x="5.5" y="4.5" width="50" height="8" fill="none" stroke="#BDBDBD"/><rect x="10" y="7" width="41" height="3" fill="#2F68A8"/><rect x="5.5" y="17.5" width="50" height="25" fill="none" stroke="#BDBDBD"/><rect x="18" y="25" width="25" height="2" fill="#2F68A8"/></svg>
<div class="a" style="left:775px;top:241px;width:61px;height:47px;background:#fff;border:1px solid #6E6E6E;border-right-color:#3A3A3A;border-bottom-color:#3A3A3A"></div>
<svg class="a" style="left:775px;top:241px" width="61" height="47" viewBox="0 0 61 47"><rect x="5.5" y="4.5" width="50" height="8" fill="none" stroke="#BDBDBD"/><rect x="10" y="7" width="41" height="3" fill="#2F68A8"/><rect x="5.5" y="17.5" width="50" height="25" fill="none" stroke="#BDBDBD"/></svg>
<div class="a" style="left:893px;top:241px;width:61px;height:47px;background:#fff;border:1px solid #6E6E6E;border-right-color:#3A3A3A;border-bottom-color:#3A3A3A"></div>
<svg class="a" style="left:893px;top:241px" width="61" height="47" viewBox="0 0 61 47"><rect x="5.5" y="4.5" width="50" height="8" fill="none" stroke="#BDBDBD"/><rect x="10" y="7" width="41" height="3" fill="#2F68A8"/><rect x="5.5" y="17.5" width="23" height="25" fill="none" stroke="#BDBDBD"/><rect x="32.5" y="17.5" width="23" height="25" fill="none" stroke="#BDBDBD"/></svg>
<div class="a" style="left:775px;top:307px;width:61px;height:47px;background:#fff;border:1px solid #6E6E6E;border-right-color:#3A3A3A;border-bottom-color:#3A3A3A"></div>
<svg class="a" style="left:775px;top:307px" width="61" height="47" viewBox="0 0 61 47"><rect x="5.5" y="4.5" width="50" height="8" fill="none" stroke="#BDBDBD"/><rect x="10" y="7" width="41" height="3" fill="#2F68A8"/></svg>
<div class="a" style="left:893px;top:307px;width:61px;height:47px;background:#fff;border:1px solid #6E6E6E;border-right-color:#3A3A3A;border-bottom-color:#3A3A3A"></div>
<svg class="a" style="left:893px;top:307px" width="61" height="47" viewBox="0 0 61 47"><rect x="5.5" y="4.5" width="50" height="38" fill="none" stroke="#BDBDBD"/><rect x="17" y="20" width="27" height="2" fill="#2F68A8"/><rect x="22" y="25" width="17" height="2" fill="#2F68A8"/></svg>
<div class="a" style="left:775px;top:373px;width:61px;height:47px;background:#fff;border:1px solid #6E6E6E;border-right-color:#3A3A3A;border-bottom-color:#3A3A3A"></div>
<svg class="a" style="left:775px;top:373px" width="61" height="47" viewBox="0 0 61 47"><rect x="5.5" y="4.5" width="50" height="8" fill="none" stroke="#BDBDBD"/><rect x="10" y="7" width="41" height="3" fill="#2F68A8"/><rect x="5.5" y="17.5" width="23" height="11" fill="none" stroke="#BDBDBD"/><rect x="5.5" y="31.5" width="23" height="11" fill="none" stroke="#BDBDBD"/><rect x="32.5" y="17.5" width="23" height="25" fill="none" stroke="#BDBDBD"/></svg>
<div class="a" style="left:893px;top:373px;width:61px;height:47px;background:#fff;border:1px solid #6E6E6E;border-right-color:#3A3A3A;border-bottom-color:#3A3A3A"></div>
<svg class="a" style="left:893px;top:373px" width="61" height="47" viewBox="0 0 61 47"><rect x="5.5" y="4.5" width="50" height="8" fill="none" stroke="#BDBDBD"/><rect x="10" y="7" width="41" height="3" fill="#2F68A8"/><rect x="5.5" y="17.5" width="23" height="25" fill="none" stroke="#BDBDBD"/><rect x="32.5" y="17.5" width="23" height="11" fill="none" stroke="#BDBDBD"/><rect x="32.5" y="31.5" width="23" height="11" fill="none" stroke="#BDBDBD"/></svg>
<div class="a" style="left:775px;top:439px;width:61px;height:47px;background:#fff;border:1px solid #6E6E6E;border-right-color:#3A3A3A;border-bottom-color:#3A3A3A"></div>
<svg class="a" style="left:775px;top:439px" width="61" height="47" viewBox="0 0 61 47"><rect x="5.5" y="4.5" width="50" height="8" fill="none" stroke="#BDBDBD"/><rect x="10" y="7" width="41" height="3" fill="#2F68A8"/><rect x="5.5" y="17.5" width="23" height="11" fill="none" stroke="#BDBDBD"/><rect x="32.5" y="17.5" width="23" height="11" fill="none" stroke="#BDBDBD"/><rect x="5.5" y="31.5" width="50" height="11" fill="none" stroke="#BDBDBD"/></svg>
<div class="a" style="left:893px;top:439px;width:61px;height:47px;background:#fff;border:1px solid #6E6E6E;border-right-color:#3A3A3A;border-bottom-color:#3A3A3A"></div>
<svg class="a" style="left:893px;top:439px" width="61" height="47" viewBox="0 0 61 47"><rect x="5.5" y="4.5" width="50" height="8" fill="none" stroke="#BDBDBD"/><rect x="10" y="7" width="41" height="3" fill="#2F68A8"/><rect x="5.5" y="17.5" width="50" height="11" fill="none" stroke="#BDBDBD"/><rect x="5.5" y="31.5" width="50" height="11" fill="none" stroke="#BDBDBD"/></svg>
<div class="a" style="left:775px;top:505px;width:61px;height:47px;background:#fff;border:1px solid #6E6E6E;border-right-color:#3A3A3A;border-bottom-color:#3A3A3A"></div>
<svg class="a" style="left:775px;top:505px" width="61" height="47" viewBox="0 0 61 47"><rect x="5.5" y="4.5" width="50" height="8" fill="none" stroke="#BDBDBD"/><rect x="10" y="7" width="41" height="3" fill="#2F68A8"/><rect x="5.5" y="17.5" width="23" height="11" fill="none" stroke="#BDBDBD"/><rect x="32.5" y="17.5" width="23" height="11" fill="none" stroke="#BDBDBD"/><rect x="5.5" y="31.5" width="23" height="11" fill="none" stroke="#BDBDBD"/><rect x="32.5" y="31.5" width="23" height="11" fill="none" stroke="#BDBDBD"/></svg>
<div class="a" style="left:893px;top:505px;width:61px;height:47px;background:#fff;border:1px solid #6E6E6E;border-right-color:#3A3A3A;border-bottom-color:#3A3A3A"></div>
<svg class="a" style="left:893px;top:505px" width="61" height="47" viewBox="0 0 61 47"><rect x="5.5" y="4.5" width="50" height="8" fill="none" stroke="#BDBDBD"/><rect x="10" y="7" width="41" height="3" fill="#2F68A8"/><rect x="5.5" y="17.5" width="14" height="11" fill="none" stroke="#BDBDBD"/><rect x="23.5" y="17.5" width="14" height="11" fill="none" stroke="#BDBDBD"/><rect x="41.5" y="17.5" width="14" height="11" fill="none" stroke="#BDBDBD"/><rect x="5.5" y="31.5" width="14" height="11" fill="none" stroke="#BDBDBD"/><rect x="23.5" y="31.5" width="14" height="11" fill="none" stroke="#BDBDBD"/><rect x="41.5" y="31.5" width="14" height="11" fill="none" stroke="#BDBDBD"/></svg>
<svg class="a" style="left:1000px;top:123px;" width="10" height="11" viewBox="0 0 10 11"><path d="M0 1.5h8M0 3.5h8M0 5.5h8" stroke="#2A3440" stroke-width="1"/><path d="M4 7h6l-3 3.5z" fill="#1A2430"/></svg>
<div class="a" style="left:993px;top:147px;width:23px;height:1px;background:#D8D8D8"></div>
<div class="a" style="left:988px;top:151px;width:34px;height:32px;background:#F6F6F6;border:1px solid #B8B8B8;border-radius:4px"></div>
<svg class="a" style="left:993px;top:155px;" width="21" height="23" viewBox="0 0 21 23"><ellipse cx="10.5" cy="20.5" rx="8" ry="2" fill="#000" opacity=".13"/>
<path d="M10.5 1L19.5 5.5L10.5 10L1.5 5.5z" fill="#5CB8F6"/>
<path d="M15 3.25L19.5 5.5L15 7.75L10.5 5.5z" fill="#8EDC3A"/>
<path d="M1.5 5.5L10.5 10V19.5L1.5 15z" fill="#2A92E6"/>
<path d="M6 12.25L10.5 14.5V19.5L6 17.25z" fill="#6CC828"/>
<path d="M10.5 10L19.5 5.5V15L10.5 19.5z" fill="#7AD428"/>
<path d="M10.5 10L15 7.75V12.5L10.5 14.75z" fill="#3AA0F0"/>
<path d="M6 3.25L15 7.75M15 3.25L6 7.75M1.5 10.25L10.5 14.75L19.5 10.25M6 7.75V17.25M15 7.75V17.25" stroke="#fff" stroke-width=".7" fill="none" opacity=".85"/>
<path d="M10.5 1L19.5 5.5V15L10.5 19.5L1.5 15V5.5z" fill="none" stroke="#2A70B0" stroke-width=".5"/></svg>
<svg class="a" style="left:993px;top:190px;" width="20" height="22" viewBox="0 0 20 22"><ellipse cx="10" cy="20" rx="8" ry="1.8" fill="#000" opacity=".12"/>
<rect x="0.5" y="0.5" width="19" height="17" fill="#fff" stroke="#4A5A6A"/>
<rect x="2" y="2" width="16" height="2" fill="#3C78C3"/>
<rect x="4" y="8" width="3" height="9" fill="#2A7DE1"/><rect x="8.5" y="7" width="3" height="10" fill="#F2A020"/><rect x="13" y="8" width="3" height="9" fill="#40B030"/></svg>
<svg class="a" style="left:992px;top:224px;" width="24" height="23" viewBox="0 0 24 23"><ellipse cx="11" cy="21" rx="8" ry="1.8" fill="#000" opacity=".12"/>
<path d="M9.5 1l2.8 5.8l6.3.8l-4.6 4.4l1.1 6.2l-5.6-3l-5.6 3l1.1-6.2l-4.6-4.4l6.3-.8z" fill="#F8C020" stroke="#C88000" stroke-width=".8"/>
<path d="M18 7h5M19 10h4M18 13h4" stroke="#F2A020" stroke-width="1"/></svg>
<svg class="a" style="left:993px;top:260px;" width="22" height="23" viewBox="0 0 22 23"><ellipse cx="11" cy="21" rx="8" ry="1.8" fill="#000" opacity=".12"/>
<rect x="0.5" y="4.5" width="12" height="13" fill="#fff" stroke="#4A5A6A"/>
<rect x="8.5" y="0.5" width="12" height="15" fill="#EAF2FA" stroke="#7A8A9A"/>
<path d="M11 3h8M11 5h8" stroke="#3C78C3"/><path d="M12 14l3-4l3 2l2-2v4z" fill="#40A030"/>
<path d="M3 10h5v-3l4 4.5l-4 4.5v-3h-5z" fill="#1A70C8"/></svg>
<svg class="a" style="left:992px;top:294px;" width="24" height="24" viewBox="0 0 24 24"><ellipse cx="12" cy="22" rx="8" ry="1.8" fill="#000" opacity=".12"/>
<path d="M3 10c4-6 12-6 14 2l-4 8c-4-1-8-4-10-10z" fill="#1A5FB0"/>
<path d="M10 13c3-2 7-1 9 3c-2 3-6 4-9 2z" fill="#40B030"/>
<circle cx="9" cy="5" r="3" fill="#E8541E"/>
<path d="M4 6l1 2l2 0l-1.5 1.5l.5 2l-2-1l-2 1l.5-2l-1.5-1.5l2 0z" fill="#F060A0"/>
<path d="M17 1l1 2l2 0l-1.5 1.5l.5 2l-2-1l-2 1l.5-2l-1.5-1.5l2 0z" fill="#B060E0"/>
<path d="M21 4l1.3 2.5l2.7.3l-2 1.9l.5 2.7l-2.5-1.3l-2.5 1.3l.5-2.7l-2-1.9l2.7-.3z" fill="#F8C020"/>
<path d="M21 12l1 2l2 0l-1.5 1.5l.5 2l-2-1l-2 1l.5-2l-1.5-1.5l2 0z" fill="#F04060"/></svg>
<svg class="a" style="left:992px;top:330px;" width="24" height="23" viewBox="0 0 24 23"><ellipse cx="12" cy="21" rx="8" ry="1.8" fill="#000" opacity=".12"/>
<path d="M1 7l16-5l4 11l-16 5z" fill="#fff" stroke="#6A7A8A" stroke-width=".8"/>
<path d="M3 8l12-4l3 8l-12 4z" fill="#7AC0F0"/>
<path d="M6 15l4-4l3 2l5-3l1 2l-12 4z" fill="#40A030"/>
<path d="M5 10h3v3" stroke="#1A5FB0" stroke-width="1.2" fill="none"/></svg>
<svg class="a" style="left:993px;top:365px;" width="22" height="24" viewBox="0 0 22 24"><ellipse cx="11" cy="22" rx="8" ry="1.8" fill="#000" opacity=".12"/>
<circle cx="11" cy="11" r="10" fill="#F8A020" stroke="#C86A00" stroke-width=".8"/>
<circle cx="11" cy="11" r="7.5" fill="#fff"/>
<path d="M15 5l-3 7l-2-2z" fill="#E02020"/><path d="M7 17l3-7l2 2z" fill="#2A6CC8"/>
<text x="11" y="7" font-family="Liberation Sans" font-size="4.5" font-weight="bold" fill="#333" text-anchor="middle">N</text></svg>
<div class="a" style="left:213px;top:674px;width:7px;height:1px;background:#8E8E8E"></div>
<div class="a" style="left:221px;top:674px;width:515px;height:1px;background:#DEDEDE"></div>
<div class="a" style="left:737px;top:674px;width:281px;height:1px;background:#8E8E8E"></div>
<div class="a" style="left:0px;top:675px;width:1018px;height:30px;background:#F5F6F7"></div>
<div class="a" style="left:0px;top:705px;width:1018px;height:1px;background:#D3D4D6"></div>
<svg class="a" style="left:4px;top:682px;" width="3" height="3" viewBox="0 0 3 3"><rect x="0" y="0" width="2" height="2" fill="#6B6B6B"/><rect x="1" y="1" width="1" height="1" fill="#C8C8C8"/></svg>
<svg class="a" style="left:4px;top:686px;" width="3" height="3" viewBox="0 0 3 3"><rect x="0" y="0" width="2" height="2" fill="#6B6B6B"/><rect x="1" y="1" width="1" height="1" fill="#C8C8C8"/></svg>
<svg class="a" style="left:4px;top:690px;" width="3" height="3" viewBox="0 0 3 3"><rect x="0" y="0" width="2" height="2" fill="#6B6B6B"/><rect x="1" y="1" width="1" height="1" fill="#C8C8C8"/></svg>
<svg class="a" style="left:4px;top:694px;" width="3" height="3" viewBox="0 0 3 3"><rect x="0" y="0" width="2" height="2" fill="#6B6B6B"/><rect x="1" y="1" width="1" height="1" fill="#C8C8C8"/></svg>
<svg class="a" style="left:4px;top:698px;" width="3" height="3" viewBox="0 0 3 3"><rect x="0" y="0" width="2" height="2" fill="#6B6B6B"/><rect x="1" y="1" width="1" height="1" fill="#C8C8C8"/></svg>
<div class="a" style="left:12px;top:677px;width:25px;height:27px;background:#C4DDF5;border:1px solid #7EB4EA"></div>
<svg class="a" style="left:19px;top:681px;" width="11" height="16" viewBox="0 0 11 16"><path d="M1.5 0.5v12.5l3-3l2.5 5l2-1l-2.5-5h4z" fill="#fff" stroke="#111" stroke-linejoin="round"/></svg>
<div class="a" style="left:40px;top:684px;width:1px;height:14px;background:#C9CBCE"></div>
<svg class="a" style="left:49px;top:682px;" width="16" height="16" viewBox="0 0 16 16"><path d="M1 15L15 1" stroke="#2A6CC8" stroke-width="1.6"/></svg>
<svg class="a" style="left:74px;top:682px;" width="16" height="16" viewBox="0 0 16 16"><path d="M0.5 8h13" stroke="#2A7DE1" stroke-width="1.8"/><path d="M9.5 3.5l5 4.5l-5 4.5" stroke="#2A7DE1" stroke-width="1.8" fill="none"/></svg>
<svg class="a" style="left:99px;top:682px;" width="16" height="16" viewBox="0 0 16 16"><rect x="0.5" y="3.5" width="15" height="9" fill="#58A8F0" stroke="#1C4E9A"/><rect x="1.5" y="4.5" width="13" height="3" fill="#9BD0FA"/></svg>
<svg class="a" style="left:124px;top:682px;" width="16" height="16" viewBox="0 0 16 16"><ellipse cx="8" cy="8" rx="7.5" ry="4.8" fill="#58A8F0" stroke="#1C4E9A"/><ellipse cx="8" cy="6.5" rx="5.5" ry="2.3" fill="#9BD0FA"/></svg>
<svg class="a" style="left:149px;top:681px;" width="16" height="16" viewBox="0 0 16 16"><path d="M1 1h14v4.5h-1.5c-.5-2-1-2.5-3-2.5v10c0 1 .5 1.2 2 1.3v1.2h-9v-1.2c1.5-.1 2-.3 2-1.3v-10c-2 0-2.5.5-3 2.5h-1.5z" fill="#2C5070"/></svg>
<div class="a" style="left:173px;top:684px;width:1px;height:14px;background:#C9CBCE"></div>
<svg class="a" style="left:181px;top:682px;" width="16" height="16" viewBox="0 0 16 16"><path d="M1 14c2-3 4 0 6-1s3-2 6-1.5" stroke="#1F5FB0" stroke-width="1.5" fill="none"/>
<path d="M5 11l1-3l7-7l2 2l-7 7z" fill="#F6C12B" stroke="#7A5200" stroke-width=".8"/>
<path d="M12 2l2 2l1.2-1.2l-2-2z" fill="#E84A6A"/></svg>
<svg class="a" style="left:205px;top:688px;" width="6" height="4" viewBox="0 0 6 4"><path d="M0 0h6l-3 3.5z" fill="#000"/></svg>
<svg class="a" style="left:217px;top:682px;" width="16" height="16" viewBox="0 0 16 16"><path d="M3 3.5l4.5 3v6l5 0.5" stroke="#1F5FB0" stroke-width="1.6" fill="none"/>
<circle cx="3" cy="3.5" r="2.4" fill="#4FA2F0" stroke="#1F5FB0" stroke-width=".8"/>
<circle cx="13" cy="13" r="2.4" fill="#4FA2F0" stroke="#1F5FB0" stroke-width=".8"/></svg>
<svg class="a" style="left:241px;top:688px;" width="6" height="4" viewBox="0 0 6 4"><path d="M0 0h6l-3 3.5z" fill="#000"/></svg>
<svg class="a" style="left:253px;top:682px;" width="16" height="16" viewBox="0 0 16 16"><path d="M8 0.5l7.5 7.5l-7.5 7.5l-7.5-7.5z" fill="#58A8F0" stroke="#1C4E9A"/><path d="M8 2l5 5h-10z" fill="#9BD0FA"/></svg>
<svg class="a" style="left:277px;top:688px;" width="6" height="4" viewBox="0 0 6 4"><path d="M0 0h6l-3 3.5z" fill="#000"/></svg>
<svg class="a" style="left:289px;top:682px;" width="16" height="16" viewBox="0 0 16 16"><circle cx="8" cy="8" r="7.5" fill="#58A8F0" stroke="#1C4E9A" stroke-width=".9"/><circle cx="8" cy="6" r="5" fill="#8CC6F8"/>
<circle cx="5.5" cy="6" r="1" fill="#1C4E9A"/><circle cx="10.5" cy="6" r="1" fill="#1C4E9A"/>
<path d="M4 9.5c2 3 6 3 8 0" stroke="#1C4E9A" stroke-width="1" fill="none"/></svg>
<svg class="a" style="left:313px;top:688px;" width="6" height="4" viewBox="0 0 6 4"><path d="M0 0h6l-3 3.5z" fill="#000"/></svg>
<svg class="a" style="left:325px;top:682px;" width="16" height="16" viewBox="0 0 16 16"><path d="M0.5 8l5-4.5v2.5h5v-2.5l5 4.5l-5 4.5v-2.5h-5v2.5z" fill="#8CC6F8" stroke="#1C4E9A" stroke-linejoin="round"/></svg>
<svg class="a" style="left:349px;top:688px;" width="6" height="4" viewBox="0 0 6 4"><path d="M0 0h6l-3 3.5z" fill="#000"/></svg>
<svg class="a" style="left:361px;top:682px;" width="16" height="16" viewBox="0 0 16 16"><rect x="1.5" y="1.5" width="13" height="13" fill="#58A8F0" stroke="#1C4E9A"/><rect x="2" y="2" width="12" height="3" fill="#9BD0FA"/>
<path d="M4.5 2v12" stroke="#1C4E9A"/></svg>
<svg class="a" style="left:385px;top:688px;" width="6" height="4" viewBox="0 0 6 4"><path d="M0 0h6l-3 3.5z" fill="#000"/></svg>
<svg class="a" style="left:397px;top:682px;" width="16" height="16" viewBox="0 0 16 16"><path d="M1.5 1.5h13a1 1 0 0 1 1 1v7a1 1 0 0 1-1 1h-8.5l-4 4v-4h-.5a1 1 0 0 1-1-1v-7a1 1 0 0 1 1-1z" fill="#58A8F0" stroke="#1C4E9A"/>
<rect x="2.5" y="2.5" width="11" height="3" fill="#9BD0FA"/></svg>
<svg class="a" style="left:421px;top:688px;" width="6" height="4" viewBox="0 0 6 4"><path d="M0 0h6l-3 3.5z" fill="#000"/></svg>
<svg class="a" style="left:433px;top:682px;" width="16" height="16" viewBox="0 0 16 16"><path d="M8 0.8l2.1 4.8l5.2.5l-3.9 3.4l1.2 5.1l-4.6-2.7l-4.6 2.7l1.2-5.1l-3.9-3.4l5.2-.5z" fill="#58A8F0" stroke="#1C4E9A" stroke-linejoin="round"/></svg>
<svg class="a" style="left:457px;top:688px;" width="6" height="4" viewBox="0 0 6 4"><path d="M0 0h6l-3 3.5z" fill="#000"/></svg>
<div class="a" style="left:469px;top:684px;width:1px;height:14px;background:#C9CBCE"></div>
<svg class="a" style="left:478px;top:682px;" width="16" height="16" viewBox="0 0 16 16"><path d="M2 13l3-9l8-2.5l-6 6l7 5" stroke="#1F5FB0" stroke-width="1" fill="none"/>
<g fill="#4FA2F0" stroke="#1C4E9A" stroke-width=".7"><circle cx="2" cy="13" r="1.6"/><circle cx="5" cy="4" r="1.6"/><circle cx="13" cy="1.8" r="1.6"/><circle cx="7" cy="7.5" r="1.6"/><circle cx="14" cy="12.5" r="1.6"/></g></svg>
<svg class="a" style="left:503px;top:682px;" width="16" height="16" viewBox="0 0 16 16"><path d="M1 15l5-5" stroke="#2A6CC8" stroke-width="1.4"/>
<path d="M5 11l-1-1l6-6l3 3l-6 6z" fill="#F6C12B" stroke="#7A5200" stroke-width=".8"/>
<path d="M10 4l3-3l2 2l-3 3z" fill="#C88A10" stroke="#7A5200" stroke-width=".8"/></svg>
<div class="a" style="left:527px;top:684px;width:1px;height:14px;background:#C9CBCE"></div>
<svg class="a" style="left:537px;top:682px;" width="16" height="16" viewBox="0 0 16 16"><path d="M5 3l3-2.5l3 2.5" stroke="#333" fill="none"/>
<rect x="0.5" y="3.5" width="15" height="12" fill="#C87A20" stroke="#6A3A00"/>
<rect x="2.5" y="5.5" width="11" height="8" fill="#F6F0E0" stroke="#8A5A10" stroke-width=".6"/>
<text x="8" y="12.8" font-family="Liberation Sans" font-weight="bold" font-size="7" fill="#1C3A70" text-anchor="middle">A</text></svg>
<svg class="a" style="left:561px;top:682px;" width="16" height="16" viewBox="0 0 16 16"><circle cx="11" cy="5.5" r="4.8" fill="#F6C12B" stroke="#A06A00" stroke-width=".8"/>
<rect x="0.5" y="4.5" width="9" height="9" fill="#E8541E" stroke="#8A2A08"/>
<path d="M9 7l5.5 8.5h-11z" fill="#4A86C8" stroke="#1C3A70"/></svg>
<svg class="a" style="left:586px;top:682px;" width="16" height="16" viewBox="0 0 16 16"><path d="M5 3l3-2.5l3 2.5" stroke="#333" fill="none"/>
<rect x="0.5" y="3.5" width="15" height="12" fill="#C87A20" stroke="#6A3A00"/>
<rect x="2.5" y="5.5" width="11" height="8" fill="#5AB0E8"/>
<path d="M2.5 13.5l4-4l3 2l4-3v5z" fill="#3A9A30"/></svg>
<div class="a" style="left:610px;top:684px;width:1px;height:14px;background:#C9CBCE"></div>
<svg class="a" style="left:619px;top:682px;" width="16" height="16" viewBox="0 0 16 16"><path d="M3 12c-3-4 0-10 5-10s6 4 4 7" stroke="#1C4E9A" stroke-width="3.4" fill="none"/>
<path d="M3 12c-3-4 0-10 5-10s6 4 4 7" stroke="#6CB2F0" stroke-width="1.6" fill="none"/>
<path d="M6 10c0-3 4-4 5-1" stroke="#1C4E9A" stroke-width="2.4" fill="none"/></svg>
<svg class="a" style="left:643px;top:682px;" width="16" height="16" viewBox="0 0 16 16"><rect x="0.5" y="0.5" width="15" height="15" fill="#fff" stroke="#8A96A2"/>
<path d="M1.5 0.5v15" stroke="#1F8A10" stroke-width="1.6"/>
<rect x="3" y="5" width="4" height="6" fill="#2A7DE1"/>
<path d="M15 8h-6" stroke="#E8541E" stroke-width="1.6"/><path d="M11.5 5l-3 3l3 3" stroke="#E8541E" stroke-width="1.6" fill="none"/></svg>
<svg class="a" style="left:667px;top:688px;" width="6" height="4" viewBox="0 0 6 4"><path d="M0 0h6l-3 3.5z" fill="#000"/></svg>
<svg class="a" style="left:679px;top:682px;" width="16" height="16" viewBox="0 0 16 16"><rect x="5.5" y="0.5" width="10" height="10" rx="1" fill="#4A86C8" stroke="#1C3A70"/>
<rect x="0.5" y="4.5" width="10" height="10" rx="1" fill="#F6C12B" stroke="#8A5A00"/></svg>
<svg class="a" style="left:703px;top:688px;" width="6" height="4" viewBox="0 0 6 4"><path d="M0 0h6l-3 3.5z" fill="#000"/></svg>
<div class="a" style="left:716px;top:684px;width:1px;height:14px;background:#C9CBCE"></div>
<svg class="a" style="left:724px;top:682px;" width="16" height="16" viewBox="0 0 16 16"><rect x="0.5" y="0.5" width="6" height="6" fill="#DCDCDC" stroke="#C4C4C4"/>
<path d="M3.5 6.5v5h5" stroke="#C4C4C4" fill="none" stroke-width="1.5"/>
<path d="M8.5 8.5l3-2h4v6l-3 2h-4z" fill="#E8E8E8" stroke="#C4C4C4"/></svg>
<svg class="a" style="left:749px;top:682px;" width="16" height="16" viewBox="0 0 16 16"><path d="M7 6l0 9l2.5-2.5l2 3.5l1.5-1l-2-3.5h3.5z" fill="#fff" stroke="#BDBDBD"/>
<path d="M3 1v4M1 3h4M9 0v3M11.5 2.5l-2 2M0.5 7.5h4M2 11l2-2" stroke="#C8C8C8"/></svg>
<div class="a" style="left:776px;top:677px;width:10px;height:26px;background:linear-gradient(#F2F2F2,#9C9C9C)"></div>
<svg class="a" style="left:778px;top:696px;" width="6" height="4" viewBox="0 0 6 4"><path d="M0 0h6l-3 3.5z" fill="#000"/></svg>
<div class="a" style="left:787px;top:675px;width:1px;height:30px;background:#D3D4D6"></div>
<div class="a" style="left:0px;top:706px;width:1018px;height:21px;background:#F0F0F0"></div>
<div class="a" style="left:318px;top:710px;width:1px;height:16px;background:#A8A8A8"></div>
<div class="a" style="left:539px;top:710px;width:1px;height:16px;background:#A8A8A8"></div>
<div class="a" style="left:555px;top:710px;width:1px;height:16px;background:#A8A8A8"></div>
<div class="a" style="left:584px;top:710px;width:1px;height:16px;background:#A8A8A8"></div>
<div class="a" style="left:657px;top:710px;width:1px;height:16px;background:#A8A8A8"></div>
<div class="a" style="left:841px;top:710px;width:1px;height:16px;background:#A8A8A8"></div>
<div class="a" style="left:985px;top:710px;width:1px;height:16px;background:#A8A8A8"></div>
<svg class="a" style="left:326px;top:711px;" width="15" height="11" viewBox="0 0 15 11"><path d="M4.5 0v7M1 3.5h7" stroke="#2A3AC8" stroke-width="1"/>
<rect x="4.5" y="3.5" width="10" height="7" fill="none" stroke="#333" stroke-dasharray="1 1"/></svg>
<div class="t" style="left:346px;top:712.84px;font-size:12px;font-weight:400;color:#000;letter-spacing:-0.45px">25,99 / 20,99</div>
<svg class="a" style="left:432px;top:711px;" width="15" height="11" viewBox="0 0 15 11"><path d="M0.5 3v7" stroke="#333" stroke-dasharray="1 1"/>
<rect x="4.5" y="1.5" width="10" height="9" fill="none" stroke="#333" stroke-dasharray="1 1"/>
<path d="M5 0.5l2 2M14 0.5l-2 2" stroke="#333"/></svg>
<div class="t" style="left:453px;top:712.84px;font-size:12px;font-weight:400;color:#000;letter-spacing:-0.4px">0,00 x 0,00</div>
<div class="t" style="left:591px;top:712.84px;font-size:12px;font-weight:400;color:#000;letter-spacing:-0.3px">Слайд 1 / 1</div>
<div class="t" style="left:664px;top:712.84px;font-size:12px;font-weight:400;color:#000;">Обычный</div>
<svg class="a" style="left:899px;top:721px;" width="77" height="6" viewBox="0 0 77 6"><g fill="#E4E8EC"><rect x="0" y="1" width="18" height="5"/><rect x="20" y="1" width="18" height="5"/><rect x="40" y="1" width="18" height="5"/><rect x="59" y="1" width="18" height="5"/></g><g fill="#A4C2DA"><ellipse cx="9" cy="7" rx="5" ry="3.5"/><ellipse cx="29" cy="7" rx="5.5" ry="3.5"/><rect x="44" y="3" width="10" height="4"/><rect x="62" y="4" width="12" height="3"/></g></svg>
<div class="a" style="left:910px;top:721px;width:1px;height:6px;background:#6A6A6A"></div>
<svg class="a" style="left:846px;top:712px;" width="13" height="13" viewBox="0 0 13 13"><circle cx="6.5" cy="6.5" r="5.4" fill="#C8DAEC" stroke="#4A6A8A" stroke-width="1.2"/><path d="M3.5 6.5h6" stroke="#1A2A3A" stroke-width="1.6"/></svg>
<div class="a" style="left:863px;top:718px;width:97px;height:1px;background:#6A6A6A"></div>
<div class="a" style="left:910px;top:713px;width:1px;height:11px;background:#7A7A7A"></div>
<svg class="a" style="left:878px;top:713px;" width="10" height="11" viewBox="0 0 10 11"><defs><linearGradient id="kn" x1="0" y1="0" x2="0" y2="1"><stop offset="0" stop-color="#A8C4E0"/><stop offset="1" stop-color="#4A6A90"/></linearGradient></defs><path d="M5 0.5v2" stroke="#555"/><circle cx="5" cy="6" r="3.9" fill="url(#kn)" stroke="#2E4A6A" stroke-width="1"/></svg>
<svg class="a" style="left:964px;top:712px;" width="13" height="13" viewBox="0 0 13 13"><circle cx="6.5" cy="6.5" r="5.4" fill="#C8DAEC" stroke="#4A6A8A" stroke-width="1.2"/><path d="M3.5 6.5h6M6.5 3.5v6" stroke="#1A2A3A" stroke-width="1.6"/></svg>
<div class="t" style="left:989px;top:712.84px;font-size:12px;font-weight:400;color:#000;letter-spacing:-0.3px">45 %</div>
<svg class="a" style="left:830px;top:560px" width="188" height="167" viewBox="0 0 188 167">
<defs><filter id="wsh" x="-30%" y="-30%" width="160%" height="160%"><feGaussianBlur in="SourceAlpha" stdDeviation="2.5"/><feOffset dx="1" dy="1.5" result="b"/><feComponentTransfer in="b" result="c"><feFuncA type="linear" slope="0.2"/></feComponentTransfer><feMerge><feMergeNode in="c"/><feMergeNode in="SourceGraphic"/></feMerge></filter></defs>
<g transform="translate(97.2,108.6) rotate(-29)">
 <g filter="url(#wsh)">
 <g fill="#FFFFFF" fill-opacity="0.6">
  <path d="M0 -33h58v33h-58z"/>
  <path d="M-8 -32l4-7h64l4 7z"/>
  <path d="M-20 -19h18v7h-18z"/>
  <g transform="skewX(-12)">
   <path d="M-62 -34h8v28h14v7h-22z"/>
   <path d="M-36 -34h8v28h16v7h-24z"/>
   <path d="M-100 1l12-35h9l12 35h-8l-8-25l-9 25z"/>
  </g>
  <path d="M-6 -52c4-14 20-20 30-13l2-5l10 14l-15 1l2-5c-8-5-19 0-23 9z"/>
 </g>
 <g font-family="Liberation Sans" font-weight="bold" fill="#FFFFFF" fill-opacity="0.5">
  <text x="58" y="0" font-size="12" textLength="35" lengthAdjust="spacingAndGlyphs">.NET</text>
 </g>
 </g>
 <g font-family="Liberation Sans" font-weight="bold" fill="#000" fill-opacity="0.13">
  <text x="6" y="-19" font-size="15" textLength="45" lengthAdjust="spacingAndGlyphs">FREE</text>
  <text x="4" y="-3.5" font-size="16" textLength="48" lengthAdjust="spacingAndGlyphs">LOAD</text>
 </g>
</g></svg>
</body></html>
